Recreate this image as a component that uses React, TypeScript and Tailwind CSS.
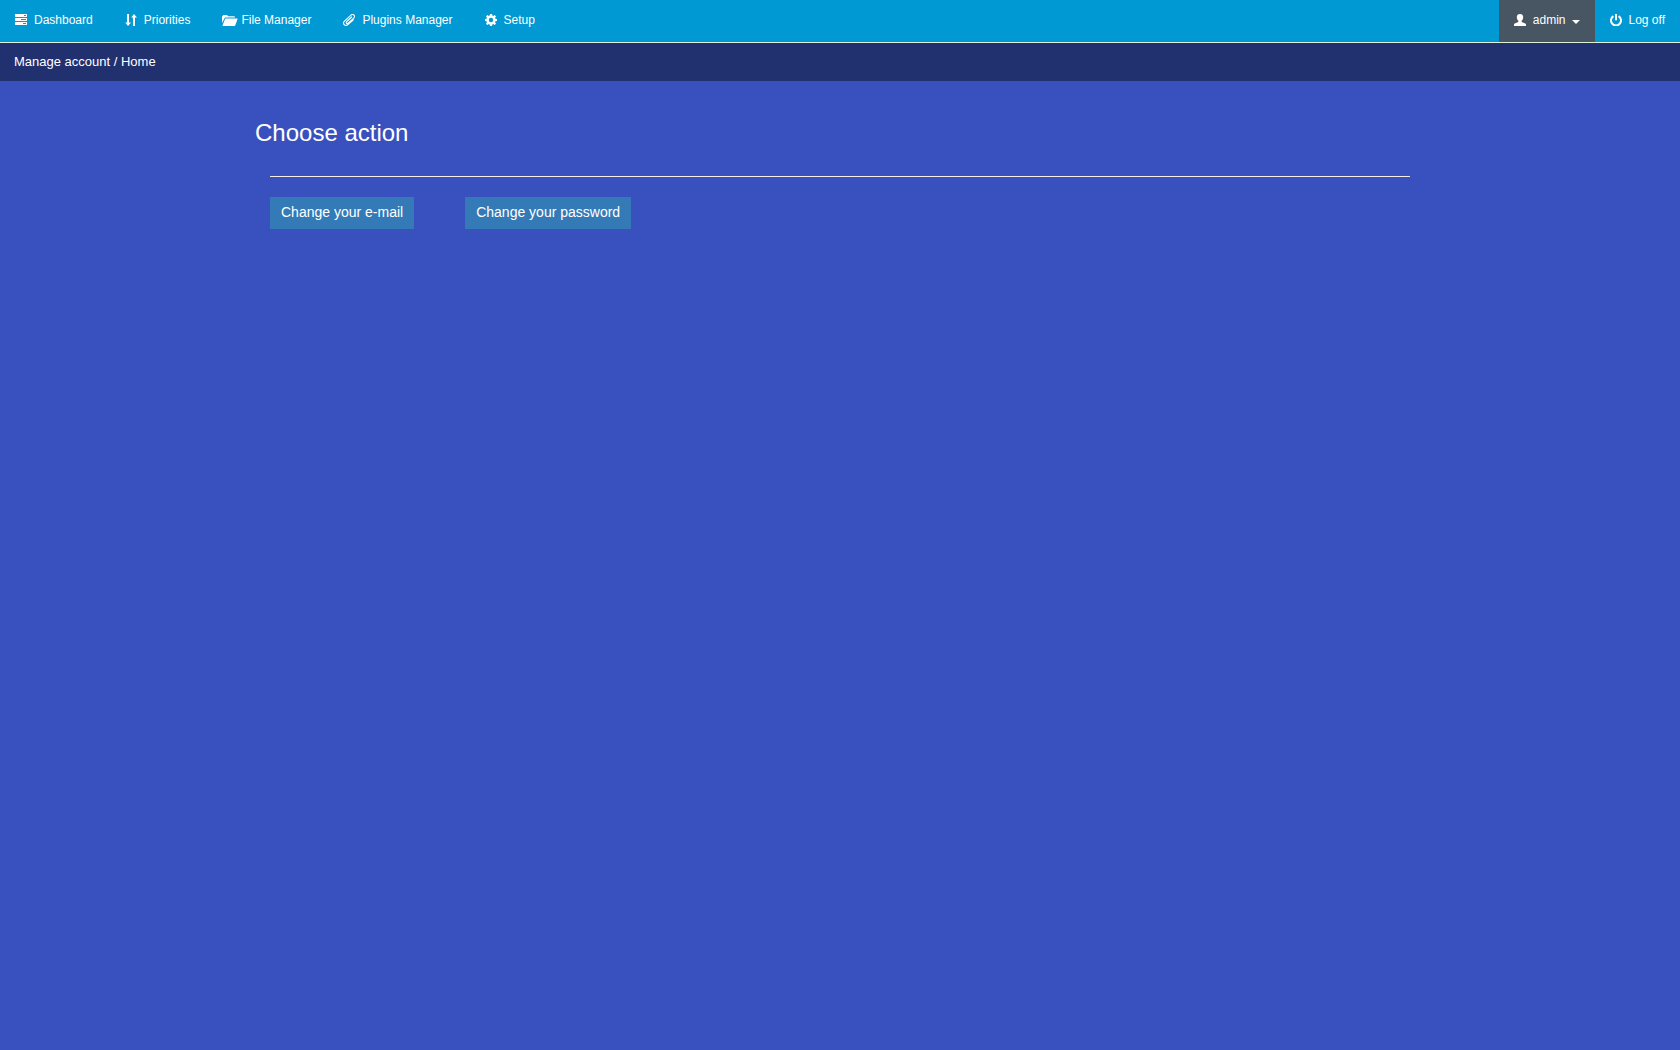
import type { ReactNode } from "react";

function Icon({ wide = false, children }: { wide?: boolean; children: ReactNode }) {
  return (
    <svg
      aria-hidden="true"
      viewBox={wide ? "0 0 16 12" : "0 0 12 12"}
      className={wide ? "h-3 w-4 shrink-0 fill-current" : "h-3 w-3 shrink-0 fill-current"}
    >
      {children}
    </svg>
  );
}

const tasks = (
  <Icon>
    <path
      fillRule="evenodd"
      d="M.4 0h11.200q.4 0 .4.400v2.200q0 .4-.4.400H.400Q0 3 0 2.600V.400Q0 0 .4 0zM9 1v1h2V1zM.4 4h11.200q.4 0 .4.400v2.200q0 .4-.4.400H.400Q0 7 0 6.600V4.400Q0 4 .4 4zM6 5v1h5V5zM.4 8h11.200q.4 0 .4.400v2.200q0 .4-.4.400H.400q-.4 0-.4-.400V8.400q0-.4.400-.4zM8 9v1h3V9z"
    />
  </Icon>
);

const sort = (
  <Icon>
    <path d="M2 0h2v8.500h2L3 12 .200 8.500H2zM8 12h2V3.500h2L9 0 6.200 3.500H8z" />
  </Icon>
);

const folder = (
  <Icon wide>
    <path d="M0 9V2.500L1.500 1H5l1.200 1.300H12q1 0 1 1.200H3.500q-.7 0-1 .7z" />
    <path d="M3.700 4.500H15.200q.6 0 .4.600L13.300 11.300q-.2.700-.9.700H1q-.7 0-.4-.700L3 5q.2-.5.700-.5z" />
  </Icon>
);

const paperclip = (
  <Icon>
    <path
      fill="none"
      stroke="currentColor"
      strokeWidth="1.100"
      strokeLinecap="round"
      d="M10.300 5.800 5.200 10.300C3.900 11.500 2.200 11.600 1.200 10.600.200 9.600.4 8.300 1.500 7.200L7.700 1.300C8.800.300 10.200.300 11 1.100c.800.800.700 2.100-.300 3.100L5.500 9c-.7.700-1.500.7-1.900.300-.5-.5-.4-1.200.2-1.800L8.600 3"
    />
  </Icon>
);

const cog = (
  <Icon>
    <path
      fillRule="evenodd"
      d="M5 0h2l.35 1.600.9.400L9.700 1.050 11 2.400l-.9 1.400.35.900L12 5v2l-1.550.35-.4.900.95 1.400L9.650 11l-1.400-.950-.9.400L7 12H5l-.35-1.550-.9-.4-1.400.95L1 9.650l.95-1.400-.4-.9L0 7V5l1.550-.35.4-.9L1 2.400 2.350 1l1.400.95.9-.4zM6 3.800a2.200 2.200 0 1 0 0 4.400 2.200 2.200 0 0 0 0-4.400z"
    />
  </Icon>
);

const user = (
  <Icon>
    <path d="M6 0c1.900 0 3.200 1.200 3.200 3 0 1.700-.6 3-1.500 3.700v1.200l3.600 1.600q.7.400.7 1.100V12H0v-1.400q0-.7.700-1.100l3.600-1.600V6.700C3.400 6 2.800 4.700 2.800 3c0-1.800 1.300-3 3.200-3z" />
  </Icon>
);

const power = (
  <Icon>
    <path fill="none" stroke="currentColor" strokeWidth="2" d="M3.400 2.200a5 5 0 1 0 5.200 0" />
    <path d="M5 0h2v6.300H5z" />
  </Icon>
);

const links = [
  { label: "Dashboard", icon: tasks, gap: "gap-[7px]" },
  { label: "Priorities", icon: sort, gap: "gap-[7px]" },
  { label: "File Manager", icon: folder, gap: "gap-[3px]" },
  { label: "Plugins Manager", icon: paperclip, gap: "gap-[7px]" },
  { label: "Setup", icon: cog, gap: "gap-[7px]" },
];

const actions = ["Change your e-mail", "Change your password"];

export default function App() {
  return (
    <div className="min-h-screen bg-[#3951be] font-['Liberation_Sans',Arial,sans-serif] text-sm text-white">
      <nav className="flex h-[43px] justify-between border-b border-[#dff0d8] bg-[#0099d3] text-xs">
        <div className="flex gap-0.5">
          {links.map((link) => (
            <a key={link.label} href="#" className={`flex items-center px-[15px] pb-0.5 ${link.gap}`}>
              {link.icon}
              {link.label}
            </a>
          ))}
        </div>
        <div className="flex">
          <button type="button" className="flex items-center gap-[7px] bg-[#485563] px-[15px] pb-0.5">
            {user}
            <span className="flex items-center gap-1.5">
              admin
              <svg aria-hidden="true" viewBox="0 0 8 4" className="mt-1 h-1 w-2 fill-current">
                <path d="M0 0h8L4 4z" />
              </svg>
            </span>
          </button>
          <a href="#" className="flex items-center gap-[7px] px-[15px] pb-0.5">
            {power}
            Log off
          </a>
        </div>
      </nav>
      <div className="flex h-[38px] items-center bg-[#21306f] px-3.5 text-[13px]">
        Manage account / Home
      </div>
      <main className="mx-auto max-w-[1170px] pt-9">
        <h1 className="text-2xl leading-8">Choose action</h1>
        <div className="mx-[15px] mt-[27px] border-t border-[#f5f0e6] pt-5">
          <div className="flex gap-[51px]">
            {actions.map((action) => (
              <button key={action} type="button" className="h-8 bg-[#337ab7] px-[11px] pb-0.5">
                {action}
              </button>
            ))}
          </div>
        </div>
      </main>
    </div>
  );
}
